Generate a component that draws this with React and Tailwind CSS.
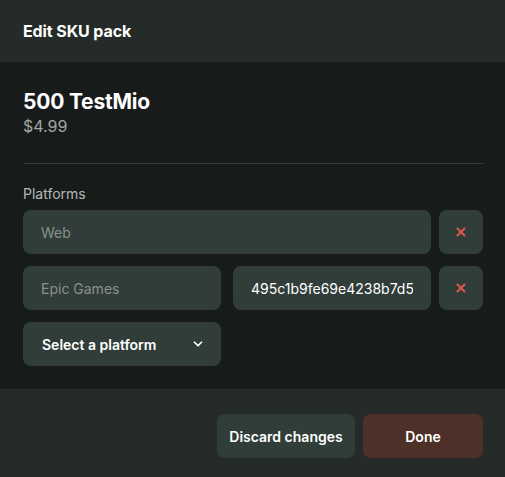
import { ChevronDown, X } from "lucide-react";

export default function App() {
  return (
    <div className="w-[505px] h-[477px] flex flex-col bg-[#171b1a] text-white" style={{ fontFamily: "Inter, 'Liberation Sans', sans-serif" }}>
      <div className="h-[62px] shrink-0 bg-[#252b29] px-[23px] flex items-center">
        <h1 className="text-[16px] font-bold tracking-[-0.1px]">Edit SKU pack</h1>
      </div>

      <div className="flex-1 pl-[23px] pr-[22px] pt-[27px]">
        <h2 className="text-[21px] leading-[26px] font-bold tracking-[-0.2px]">500 TestMio</h2>
        <p className="text-[16px] leading-[22px] text-[#a3a8a6]">$4.99</p>
        <div className="mt-[26px] h-px bg-[#323836]" />

        <p className="mt-[20px] text-[14px] leading-[20px] text-[#b4b9b7]">Platforms</p>
        <div className="mt-[6px] flex flex-col gap-3">
          <div className="flex gap-2">
            <div className="flex-1 h-[44px] rounded-lg bg-[#313d38] px-[18px] flex items-center text-[14px] text-[#89918d]">Web</div>
            <button className="w-[44px] h-[44px] shrink-0 rounded-lg bg-[#313d38] flex items-center justify-center">
              <X size={14} strokeWidth={3.5} className="text-[#d9574f]" />
            </button>
          </div>
          <div className="flex gap-2">
            <div className="flex-1 min-w-0 flex gap-3">
              <div className="w-[198px] shrink-0 h-[44px] rounded-lg bg-[#313d38] px-[18px] flex items-center text-[14px] text-[#89918d]">Epic Games</div>
              <div className="flex-1 min-w-0 h-[44px] rounded-lg bg-[#313d38] px-[18px] flex items-center text-[14px] text-white">
                <span className="block w-full min-w-0 overflow-hidden whitespace-nowrap">495c1b9fe69e4238b7d53a0f</span>
              </div>
            </div>
            <button className="w-[44px] h-[44px] shrink-0 rounded-lg bg-[#313d38] flex items-center justify-center">
              <X size={14} strokeWidth={3.5} className="text-[#d9574f]" />
            </button>
          </div>
          <button className="w-[198px] h-[44px] rounded-lg bg-[#313d38] pl-[19px] pr-[16px] flex items-center justify-between text-[14px] font-semibold">
            <span>Select a platform</span>
            <ChevronDown size={14} strokeWidth={3} />
          </button>
        </div>
      </div>

      <div className="h-[88px] shrink-0 bg-[#252b29] px-[22px] pt-[25px] flex items-start justify-end gap-2">
        <button className="w-[138px] h-[44px] rounded-lg bg-[#313d38] text-[14px] font-semibold">Discard changes</button>
        <button className="w-[120px] h-[44px] rounded-lg bg-[#4d3129] text-[14px] font-semibold">Done</button>
      </div>
    </div>
  );
}
